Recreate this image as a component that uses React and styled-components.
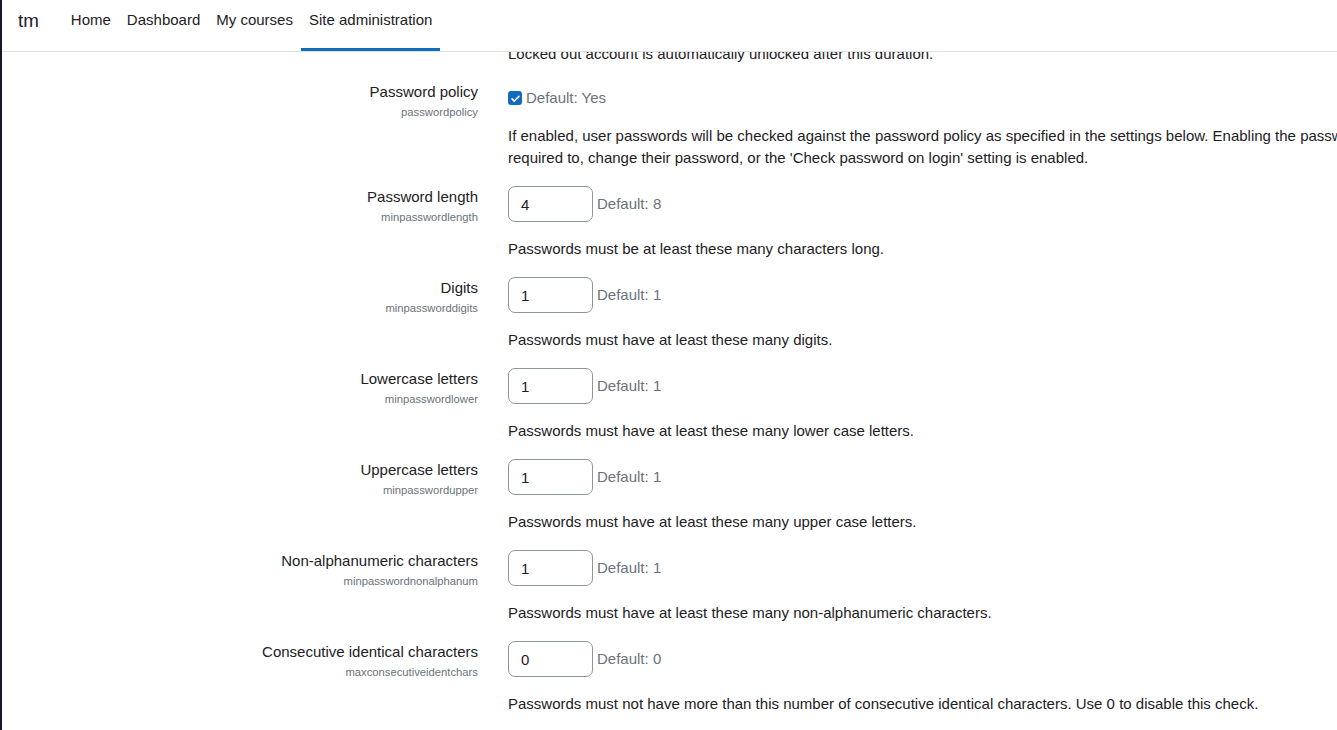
import React from "react";
import styled, { createGlobalStyle } from "styled-components";

const GlobalStyle = createGlobalStyle`
  html, body {
    margin: 0;
    padding: 0;
    background: #ffffff;
  }
  body {
    font-family: "Liberation Sans", Arial, sans-serif;
    font-size: 15px;
    color: #1d2125;
  }
`;

const Page = styled.div`
  height: 730px;
  overflow: hidden;
  border-left: 2px solid #1c1720;
  display: flex;
  flex-direction: column;
`;

const NavBar = styled.nav`
  position: relative;
  z-index: 2;
  height: 52px;
  box-sizing: border-box;
  flex-shrink: 0;
  display: flex;
  align-items: stretch;
  padding-left: 16px;
  background: #ffffff;
  border-bottom: 1px solid #dee2e6;
`;

const Brand = styled.div`
  font-size: 18.75px;
  line-height: 28px;
  padding-top: 7px;
  margin-right: 24px;
  color: #1d2125;
`;

const NavList = styled.div`
  display: flex;
  align-items: stretch;
`;

const NavLink = styled.a`
  display: block;
  box-sizing: border-box;
  padding: 9px 8px 0;
  line-height: 22px;
  color: #1d2125;
  text-decoration: none;
  border-bottom: 3px solid ${(props) => (props.$active ? "#0f6cbf" : "transparent")};
`;

const Content = styled.main`
  flex: 1;
  overflow: hidden;
`;

const SettingsList = styled.div`
  margin-top: -9px;
`;

const Row = styled.div`
  display: grid;
  grid-template-columns: 476px 1fr;
  column-gap: 30px;
  margin-bottom: ${(props) => (props.$tight ? "16px" : "17px")};
`;

const LabelCol = styled.div`
  text-align: right;
`;

const Label = styled.div`
  font-size: 15px;
  line-height: 22px;
  color: #1d2125;
`;

const ShortName = styled.div`
  font-size: 11.25px;
  line-height: 19px;
  color: #6a737b;
`;

const FieldCol = styled.div`
  min-width: 0;
`;

const ControlLine = styled.div`
  display: flex;
  align-items: center;
  gap: 4px;
  height: ${(props) => (props.$check ? "22px" : "36px")};
  padding-top: ${(props) => (props.$check ? "6px" : "0")};
`;

const TextInput = styled.input`
  width: 85px;
  height: 36px;
  box-sizing: border-box;
  padding: 0 12px;
  border: 1px solid #8f959e;
  border-radius: 7px;
  font-family: "Liberation Sans", Arial, sans-serif;
  font-size: 15px;
  color: #1d2125;
  background: #ffffff;
  outline: none;
`;

const CheckBox = styled.span`
  width: 14px;
  height: 14px;
  border-radius: 3px;
  background: #0f6cbf;
  display: inline-flex;
  align-items: center;
  justify-content: center;
`;

const DefaultText = styled.span`
  color: #6a737b;
  line-height: 22px;
`;

const Description = styled.div`
  margin-top: ${(props) => (props.$first ? "0" : "16px")};
  line-height: 22px;
  white-space: nowrap;
`;

const numericSettings = [
  {
    label: "Password length",
    name: "minpasswordlength",
    value: "4",
    def: "8",
    desc: "Passwords must be at least these many characters long.",
  },
  {
    label: "Digits",
    name: "minpassworddigits",
    value: "1",
    def: "1",
    desc: "Passwords must have at least these many digits.",
  },
  {
    label: "Lowercase letters",
    name: "minpasswordlower",
    value: "1",
    def: "1",
    desc: "Passwords must have at least these many lower case letters.",
  },
  {
    label: "Uppercase letters",
    name: "minpasswordupper",
    value: "1",
    def: "1",
    desc: "Passwords must have at least these many upper case letters.",
  },
  {
    label: "Non-alphanumeric characters",
    name: "minpasswordnonalphanum",
    value: "1",
    def: "1",
    desc: "Passwords must have at least these many non-alphanumeric characters.",
  },
  {
    label: "Consecutive identical characters",
    name: "maxconsecutiveidentchars",
    value: "0",
    def: "0",
    desc: "Passwords must not have more than this number of consecutive identical characters. Use 0 to disable this check.",
  },
];

const CheckIcon = () => (
  <svg width="11" height="11" viewBox="0 0 16 16" fill="none">
    <path
      d="M3 8.5l3.2 3.2L13 4.8"
      stroke="#ffffff"
      strokeWidth="2.4"
      strokeLinecap="round"
      strokeLinejoin="round"
    />
  </svg>
);

const App = () => {
  return (
    <Page>
      <GlobalStyle />
      <NavBar>
        <Brand>tm</Brand>
        <NavList>
          <NavLink href="#">Home</NavLink>
          <NavLink href="#">Dashboard</NavLink>
          <NavLink href="#">My courses</NavLink>
          <NavLink href="#" $active>
            Site administration
          </NavLink>
        </NavList>
      </NavBar>
      <Content>
        <SettingsList>
          <Row $tight>
            <LabelCol />
            <FieldCol>
              <Description $first>
                Locked out account is automatically unlocked after this duration.
              </Description>
            </FieldCol>
          </Row>
          <Row>
            <LabelCol>
              <Label>Password policy</Label>
              <ShortName>passwordpolicy</ShortName>
            </LabelCol>
            <FieldCol>
              <ControlLine $check>
                <CheckBox>
                  <CheckIcon />
                </CheckBox>
                <DefaultText>Default: Yes</DefaultText>
              </ControlLine>
              <Description>
                If enabled, user passwords will be checked against the password policy as
                specified in the settings below. Enabling the password policy will not affect
                existing users until they decide to, or are
                <br />
                required to, change their password, or the 'Check password on login' setting
                is enabled.
              </Description>
            </FieldCol>
          </Row>
          {numericSettings.map((s) => (
            <Row key={s.name}>
              <LabelCol>
                <Label>{s.label}</Label>
                <ShortName>{s.name}</ShortName>
              </LabelCol>
              <FieldCol>
                <ControlLine>
                  <TextInput type="text" defaultValue={s.value} />
                  <DefaultText>Default: {s.def}</DefaultText>
                </ControlLine>
                <Description>{s.desc}</Description>
              </FieldCol>
            </Row>
          ))}
        </SettingsList>
      </Content>
    </Page>
  );
};

export default App;
